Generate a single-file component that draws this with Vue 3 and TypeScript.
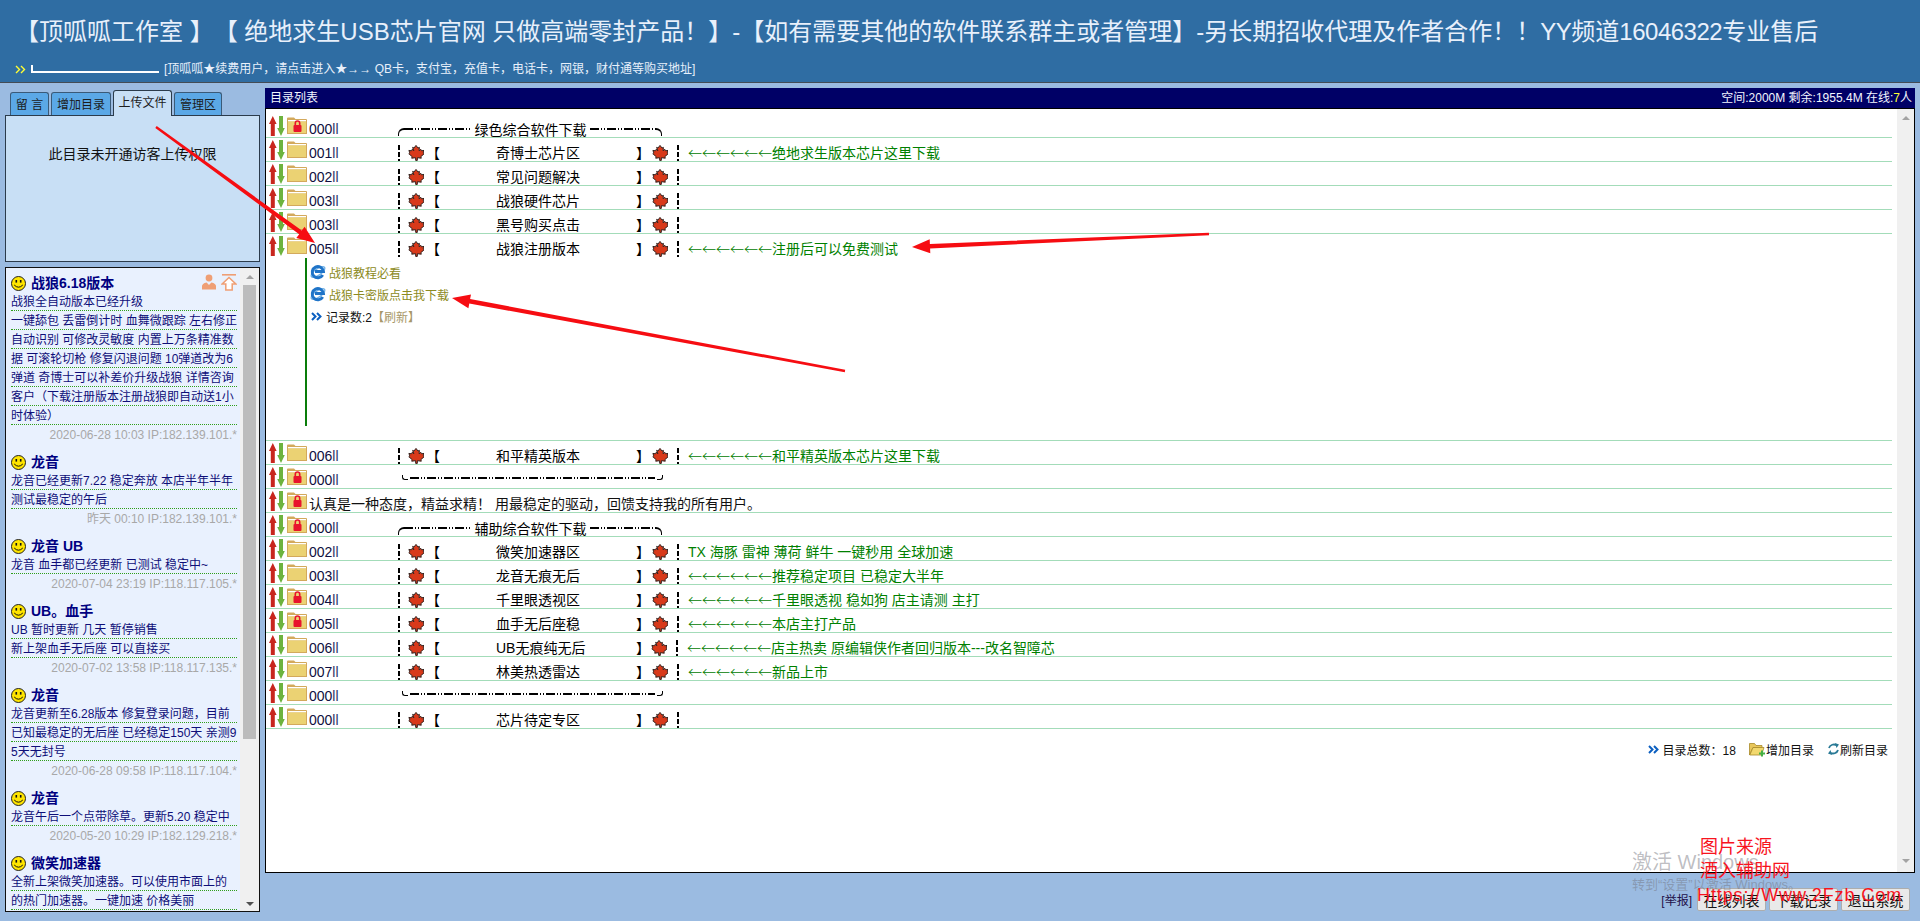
<script setup lang="ts">
interface Row {
  num: string
  kind: 'item' | 'top' | 'bottom' | 'text'
  lock?: boolean
  name?: string
  arrows?: boolean
  note?: string
  expanded?: boolean
  shift?: boolean
}
const rows: Row[] = [
  { num: '000', kind: 'top', lock: true, name: '绿色综合软件下载' },
  { num: '001', kind: 'item', name: '奇博士芯片区', arrows: true, note: '绝地求生版本芯片这里下载' },
  { num: '002', kind: 'item', name: '常见问题解决' },
  { num: '003', kind: 'item', name: '战狼硬件芯片' },
  { num: '003', kind: 'item', name: '黑号购买点击' },
  { num: '005', kind: 'item', name: '战狼注册版本', arrows: true, note: '注册后可以免费测试', expanded: true },
  { num: '006', kind: 'item', name: '和平精英版本', arrows: true, note: '和平精英版本芯片这里下载' },
  { num: '000', kind: 'bottom', lock: true },
  { num: '', kind: 'text', lock: true, name: '认真是一种态度，精益求精！ 用最稳定的驱动，回馈支持我的所有用户。' },
  { num: '000', kind: 'top', lock: true, name: '辅助综合软件下载' },
  { num: '002', kind: 'item', name: '微笑加速器区', note: 'TX 海豚 雷神 薄荷 鲜牛 一键秒用 全球加速' },
  { num: '003', kind: 'item', name: '龙音无痕无后', arrows: true, note: '推荐稳定项目 已稳定大半年' },
  { num: '004', kind: 'item', lock: true, name: '千里眼透视区', arrows: true, note: '千里眼透视 稳如狗 店主请测 主打' },
  { num: '005', kind: 'item', lock: true, name: '血手无后座稳', arrows: true, note: '本店主打产品' },
  { num: '006', kind: 'item', name: 'UB无痕纯无后', arrows: true, note: '店主热卖 原编辑侠作者回归版本---改名智障芯', shift: true },
  { num: '007', kind: 'item', name: '林美热透雷达', arrows: true, note: '新品上市' },
  { num: '000', kind: 'bottom' },
  { num: '000', kind: 'item', name: '芯片待定专区' }
]
const messages = [
  { title: '战狼6.18版本', tools: true, lines: ['战狼全自动版本已经升级', '一键舔包 丢雷倒计时 血舞微跟踪 左右修正', '自动识别 可修改灵敏度 内置上万条精准数', '据 可滚轮切枪 修复闪退问题 10弹道改为6', '弹道 奇博士可以补差价升级战狼 详情咨询', '客户（下载注册版本注册战狼即自动送1小', '时体验）'], date: '2020-06-28 10:03 IP:182.139.101.*' },
  { title: '龙音', lines: ['龙音已经更新7.22 稳定奔放 本店半年半年', '测试最稳定的午后'], date: '昨天 00:10 IP:182.139.101.*' },
  { title: '龙音 UB', lines: ['龙音 血手都已经更新 已测试 稳定中~'], date: '2020-07-04 23:19 IP:118.117.105.*' },
  { title: 'UB。血手', lines: ['UB 暂时更新 几天 暂停销售', '新上架血手无后座 可以直接买'], date: '2020-07-02 13:58 IP:118.117.135.*' },
  { title: '龙音', lines: ['龙音更新至6.28版本 修复登录问题，目前', '已知最稳定的无后座 已经稳定150天 亲测9', '5天无封号'], date: '2020-06-28 09:58 IP:118.117.104.*' },
  { title: '龙音', lines: ['龙音午后一个点带除草。更新5.20 稳定中'], date: '2020-05-20 10:29 IP:182.129.218.*' },
  { title: '微笑加速器', lines: ['全新上架微笑加速器。可以使用市面上的', '的热门加速器。一键加速 价格美丽'], date: '' }
]
const tabs = [
  { label: '留 言', cls: 't1' },
  { label: '增加目录', cls: 't2' },
  { label: '上传文件', cls: 't3 active' },
  { label: '管理区', cls: 't4' }
]
const links = ['战狼教程必看', '战狼卡密版点击我下载']
const leaf = 'M8 .4L10 3l1.400-.6-.3 3.400 1.700-1.500.7 1.500 2.600-.4-.9 2.500 1 .8-3.400 3 .5 1.500-3.900-.5-.1 2.700H7.700l-.1-2.700-3.900.5.5-1.500-3.400-3 1-.8-.9-2.500 2.600.4.7-1.500 1.700 1.500L4.600 2.400 6 3z'

function arrow(x1: number, y1: number, x2: number, y2: number): string {
  const len = Math.hypot(x2 - x1, y2 - y1)
  const ux = (x2 - x1) / len
  const uy = (y2 - y1) / len
  const nx = -uy
  const ny = ux
  const bx = x2 - ux * 18
  const by = y2 - uy * 18
  const pt = (x: number, y: number, w: number) => `${(x + nx * w).toFixed(1)},${(y + ny * w).toFixed(1)}`
  return [pt(x1, y1, 1.2), pt(bx, by, 2.2), pt(bx, by, 7), pt(x2, y2, 0), pt(bx, by, -7), pt(bx, by, -2.2), pt(x1, y1, -1.2)].join(' ')
}
const redArrows = [arrow(156, 127, 315, 243), arrow(1209, 234, 912, 247), arrow(845, 371, 452, 298)]
</script>

<template>
  <div class="page">
    <header class="top">
      <div class="title">【顶呱呱工作室 】【 绝地求生USB芯片官网 只做高端零封产品！】-【如有需要其他的软件联系群主或者管理】-另长期招收代理及作者合作！！<span class="tight">YY</span>频道<span class="tight">16046322</span>专业售后</div>
      <div class="sub">
        <svg class="chev-y" width="11" height="9" viewBox="0 0 11 9"><path d="M1 1l3.500 3.500L1 8M6 1l3.500 3.500L6 8" fill="none" stroke="#ffff33" stroke-width="1.400" /></svg>
        <span class="corner"></span>
        <span>[顶呱呱★续费用户，请点击进入★→→ QB卡，支付宝，充值卡，电话卡，网银，财付通等购买地址]</span>
      </div>
    </header>

    <div class="body">
      <aside class="side">
        <nav class="tabs">
          <div v-for="t in tabs" :key="t.label" class="tab" :class="t.cls">{{ t.label }}</div>
        </nav>
        <div class="panel">此目录未开通访客上传权限</div>
        <div class="msgs">
          <div class="msg-list">
            <article v-for="(m, i) in messages" :key="i" class="msg">
              <div class="msg-head">
                <svg width="15" height="15" viewBox="0 0 15 15"><circle cx="7.500" cy="7.500" r="7" fill="#ffe500" stroke="#222" /><rect x="4.500" y="4" width="1.600" height="2.600" fill="#111" /><rect x="8.900" y="4" width="1.600" height="2.600" fill="#111" /><path d="M3.200 9q4.300 4.400 8.600 0" fill="none" stroke="#111" /></svg>
                <b>{{ m.title }}</b>
                <span v-if="m.tools" class="tools">
                  <svg width="14" height="16" viewBox="0 0 14 16"><circle cx="7" cy="4" r="3.400" fill="#ef9f75" /><path d="M0 15.500V12q0-2.600 4.600-3.600L7 11l2.400-2.600Q14 9.400 14 12v3.500z" fill="#ef9f75" /></svg>
                  <svg width="16" height="17" viewBox="0 0 16 17"><path d="M1 .8h14" stroke="#ef9f75" stroke-width="1.600" /><path d="M8 3.500L14.800 10h-3.600v6H4.800v-6H1.200z" fill="#fff" stroke="#ef9f75" stroke-width="1.500" /></svg>
                </span>
              </div>
              <div v-for="(l, j) in m.lines" :key="j" class="msg-line">{{ l }}</div>
              <div v-if="m.date" class="msg-date">{{ m.date }}</div>
            </article>
          </div>
          <div class="bar side-bar">
            <i class="up"></i>
            <div class="thumb"></div>
            <i class="down"></i>
          </div>
        </div>
      </aside>

      <main class="main">
        <div class="main-head">
          <span>目录列表</span>
          <span>空间:2000M 剩余:1955.4M 在线:<em>7</em>人</span>
        </div>
        <div class="box">
          <div class="list">
            <template v-for="(r, i) in rows" :key="i">
              <div class="row" :class="{ open: r.expanded }">
                <svg class="updown" width="16" height="20" viewBox="0 0 16 20"><path d="M3.800 0L7.600 8H5.800v12h-4V8H0z" fill="#c8261e" /><path d="M12 20l3.800-8H14V0h-4v12H8.200z" fill="#6db33f" /></svg>
                <svg class="folder" width="20" height="17" viewBox="0 0 20 17">
                  <path d="M0 17V1.500Q0 .5 1 .5h6l1.500 1.500H19q1 0 1 1V17z" fill="#d3a95c" />
                  <rect x="1" y="3" width="18" height="1.500" fill="#fff" />
                  <rect x="1" y="4.500" width="18" height="11.500" fill="#ebd273" />
                  <g v-if="r.lock"><path d="M8.300 8V6.200a2.200 2.200 0 0 1 4.400 0V8" fill="none" stroke="#e8142c" stroke-width="1.600" /><rect x="6.500" y="8" width="8" height="7" rx="1" fill="#e8142c" /></g>
                </svg>
                <span v-if="r.kind === 'text'" class="plain">{{ r.name }}</span>
                <template v-else>
                  <span class="num">{{ r.num }}<small>ll</small></span>
                  <div v-if="r.kind === 'top'" class="cap">
                    <span class="rule left"><i></i></span>
                    <span class="cap-text">{{ r.name }}</span>
                    <span class="rule right"><i></i></span>
                  </div>
                  <div v-else-if="r.kind === 'bottom'" class="foot-rule"><i></i></div>
                  <div v-else class="item">
                    <span class="dash"></span>
                    <svg class="leaf" width="16" height="16" viewBox="0 0 16 16"><path :d="leaf" fill="#d8391a" stroke="#33221f" /></svg>
                    <span class="br">【</span>
                    <span class="name">{{ r.name }}</span>
                    <span class="br">】</span>
                    <svg class="leaf end" :class="{ shift: r.shift }" width="16" height="16" viewBox="0 0 16 16"><path :d="leaf" fill="#d8391a" stroke="#33221f" /></svg>
                    <span class="dash"></span>
                    <span class="note"><span v-if="r.arrows" class="arr">←←←←←←</span>{{ r.note }}</span>
                  </div>
                </template>
              </div>
              <div v-if="r.expanded" class="detail">
                <div class="detail-in">
                  <div v-for="l in links" :key="l" class="link">
                    <svg width="16" height="18" viewBox="0 0 16 18"><ellipse cx="8" cy="9" rx="8" ry="3.200" transform="rotate(-35 8 9)" fill="none" stroke="#6fb0e6" stroke-width="1.300" /><path d="M12.700 12A5.600 5.600 0 1 1 13.400 8.500H5" fill="none" stroke="#1f74c8" stroke-width="3" /></svg>
                    <span>{{ l }}</span>
                  </div>
                  <div class="count">
                    <svg width="11" height="9" viewBox="0 0 11 9"><path d="M1 1l3.500 3.500L1 8M6 1l3.500 3.500L6 8" fill="none" stroke="#0b5fc0" stroke-width="2" /></svg>
                    <span>记录数:2</span>
                    <span class="refresh">【刷新】</span>
                  </div>
                </div>
              </div>
            </template>
            <div class="summary">
              <svg width="11" height="9" viewBox="0 0 11 9"><path d="M1 1l3.500 3.500L1 8M6 1l3.500 3.500L6 8" fill="none" stroke="#0b5fc0" stroke-width="2" /></svg>
              <span class="total">目录总数：18</span>
              <svg width="17" height="15" viewBox="0 0 17 15"><path d="M.5 13V1.500h5l1.500 2h6v2H4l-3.500 7.500z" fill="#e8c65a" stroke="#a88a2a" stroke-width=".8" /><path d="M.8 13L4 5.500h11L12.500 13z" fill="#f2d86e" stroke="#a88a2a" stroke-width=".8" /><path d="M12 8.500h2v2h2v2h-2v2h-2v-2h-2v-2h2z" fill="#45b045" /></svg>
              <span class="act">增加目录</span>
              <svg width="13" height="14" viewBox="0 0 13 14"><path d="M2 6a5 4.500 0 0 1 8-2.500M11 8a5 4.500 0 0 1-8 2.500" fill="none" stroke="#2a7a96" stroke-width="1.800" /><path d="M8 1l4 1.500L9.500 6zM5 13L1 11.500 3.500 8z" fill="#2a7a96" /></svg>
              <span>刷新目录</span>
            </div>
          </div>
          <div class="bar">
            <i class="up"></i>
            <i class="down"></i>
          </div>
        </div>
        <div class="footer">
          <span class="report">[举报]</span>
          <button>在线列表</button>
          <button>下载记录</button>
          <button>退出系统</button>
        </div>
      </main>
    </div>

    <svg class="marks" width="1920" height="921" viewBox="0 0 1920 921">
      <polygon v-for="(p, i) in redArrows" :key="i" :points="p" fill="#f60d12" />
    </svg>
    <div class="activate">
      <div class="a1">激活 Windows</div>
      <div class="a2">转到“设置”以激活 Windows。</div>
    </div>
    <div class="stamp">
      <div class="s1">图片来源</div>
      <div class="s1">酒入辅助网</div>
      <div class="s2">Https://Www.2Fzb.Com</div>
    </div>
  </div>
</template>

<style>
html, body { margin: 0; background: #9bbbe1; }
</style>

<style scoped>
* { box-sizing: border-box; }
.page {
  position: relative;
  height: 921px;
  width: 1920px;
  overflow: hidden;
  background: #9bbbe1;
  font-family: "Liberation Sans", "Noto Sans CJK SC", sans-serif;
  font-size: 14px;
  color: #000;
  text-spacing-trim: space-all;
}
.top {
  height: 83px;
  background: #2f6da3;
  border-bottom: 1px solid #444c55;
  padding: 15px 0 0 15px;
  color: #e8f0fb;
}
.title { font-size: 24px; line-height: 34px; white-space: nowrap; }
.tight { letter-spacing: -.5px; }
.sub { display: flex; align-items: flex-end; margin-top: 12px; height: 16px; font-size: 12px; line-height: 16px; white-space: nowrap; }
.chev-y { margin-bottom: 3px; }
.corner { width: 128px; height: 8px; margin: 0 5px 4px 5px; border-left: 2px solid #fff; border-bottom: 2px solid #fff; }

.body { display: flex; padding: 5px 5px 0 5px; gap: 5px; }
.side { width: 255px; flex: none; padding-top: 2px; }
.tabs { display: flex; align-items: flex-end; height: 25px; padding-left: 5px; gap: 2px; position: relative; z-index: 1; font-size: 12px; }
.tab { height: 23px; border: 1px solid #3a5a78; border-bottom: none; border-radius: 3px 3px 0 0; background: #5ba8e6; text-align: center; line-height: 24px; color: #1c1c1c; }
.t1 { width: 39px; }
.t2 { width: 60px; }
.t3 { width: 59px; }
.t4 { width: 48px; }
.tab.active { height: 26px; margin-bottom: -1px; background: #c8dff5; line-height: 24px; border-color: #2b3b4b; }
.panel { height: 147px; background: #c8dff5; border: 1px solid #2b3b4b; text-align: center; padding-top: 29px; line-height: 18px; color: #111; }
.msgs { display: flex; margin-top: 5px; height: 645px; background: #e9f1fe; border: 1px solid #111; overflow: hidden; }
.msg-list { flex: 1; padding: 8px 3px 0 5px; min-width: 0; overflow: hidden; font-size: 12px; color: #0e0e78; }
.msg { margin-bottom: 11px; }
.msg-head { display: flex; align-items: flex-start; height: 16px; gap: 5px; position: relative; }
.msg-head b { font-size: 14px; line-height: 15px; color: #000080; }
.tools { margin-left: auto; display: flex; gap: 5px; margin-top: -2px; }
.msg-line { height: 19px; line-height: 20px; border-bottom: 1px dotted #2f9f1a; white-space: nowrap; }
.msg-date { height: 19px; line-height: 20px; text-align: right; color: #a8a8a8; white-space: nowrap; }
.bar { flex: none; width: 17px; background: #f0f0f0; position: relative; display: flex; flex-direction: column; align-items: center; }
.side-bar { width: 19px; padding: 0 1px; }
.bar i { display: block; width: 0; height: 0; border-left: 4px solid transparent; border-right: 4px solid transparent; }
.up { border-bottom: 4px solid #a3a3a3; margin-top: 7px; }
.down { border-top: 4px solid #505050; margin-top: auto; margin-bottom: 7px; }
.box .down { border-top-color: #a3a3a3; margin-bottom: 9px; }
.thumb { width: 13px; height: 454px; margin-top: 6px; background: #bcbcbc; }
.side-bar .down { margin-bottom: 5px; }

.main { width: 1650px; flex: none; }
.main-head { display: flex; justify-content: space-between; height: 20px; background: #000066; color: #f2f6ff; font-size: 12px; line-height: 21px; padding: 0 3px 0 5px; }
.main-head em { font-style: normal; color: #ffff33; }
.box { display: flex; height: 765px; background: #fff; border: 1px solid #000; }
.list { flex: 1; min-width: 0; padding: 5px 5px 0 0; }
.row { display: flex; height: 24px; border-bottom: 1px solid #a3dcb9; position: relative; white-space: nowrap; }
.row.open { border-bottom-color: transparent; }
.updown { flex: none; margin: 2px 0 0 3px; }
.folder { flex: none; margin: 3px 0 0 2px; }
.num, .plain { margin-left: 2px; margin-top: 7px; line-height: 16px; color: #101040; }
.num { width: 89px; flex: none; }
.num small { font-size: 14px; color: #33336a; }
.plain { color: #111; }
.cap { display: flex; align-items: center; width: 264px; height: 16px; margin-top: 7px; }
.cap-text { margin: 0 3px 0 4px; flex: none; }
.rule { flex: 1; position: relative; height: 6px; margin-top: 3px; }
.rule i, .foot-rule i { display: block; height: 2px; background: repeating-linear-gradient(90deg, #000 0 9px, transparent 9px 11px, #000 11px 12px, transparent 12px 14px, #000 14px 15px, transparent 15px 17px); }
.rule.left { padding-left: 6px; }
.rule.right { padding-right: 6px; }
.rule::before { content: ""; position: absolute; top: 0; width: 6px; height: 6px; border-top: 2px solid #000; }
.rule.left::before { left: 0; border-left: 1px solid #000; border-top-left-radius: 6px; }
.rule.right::before { right: 0; border-right: 1px solid #000; border-top-right-radius: 6px; }
.foot-rule { width: 261px; height: 5px; margin: 9px 0 0 4px; padding: 3px 8px 0; position: relative; }
.foot-rule::before, .foot-rule::after { content: ""; position: absolute; top: 1px; width: 5px; height: 4px; border-bottom: 1px solid #000; }
.foot-rule::before { left: 0; border-left: 1px solid #000; border-bottom-left-radius: 3px; }
.foot-rule::after { right: 0; border-right: 1px solid #000; border-bottom-right-radius: 3px; }
.item { display: flex; flex: 1; min-width: 0; align-items: flex-start; margin-top: 7px; line-height: 16px; }
.dash { flex: none; width: 2px; height: 16px; background: linear-gradient(#000 0 5px, transparent 5px 7px, #000 7px 12px, transparent 12px 14px, #000 14px 16px); }
.leaf { flex: none; margin: 0 2px 0 8px; }
.leaf.end { margin: 0 9px 0 2px; }
.leaf.shift { margin: 0 9px 0 1px; }
.br { flex: none; width: 14px; }
.name { flex: none; width: 140px; margin-left: 56px; }
.note { margin-left: 9px; color: #008000; }
.arr { font-family: "Noto Sans CJK SC", sans-serif; font-weight: 300; line-height: 0; }

.detail { height: 183px; border-bottom: 1px solid #a3dcb9; padding-left: 39px; }
.detail-in { width: 200px; height: 168px; border-left: 2px solid #0a7d0a; padding: 3px 0 0 3px; font-size: 12px; }
.link { display: flex; align-items: center; height: 22px; gap: 3px; color: #8c8a22; white-space: nowrap; }
.count { display: flex; align-items: center; height: 22px; gap: 4px; padding-left: 1px; color: #111; }
.refresh { color: #a89868; margin-left: -4px; }
.summary { display: flex; justify-content: flex-end; align-items: center; height: 14px; margin-top: 13px; padding-right: 4px; font-size: 12px; color: #111; }
.total { margin: 0 13px 0 4px; }
.act { margin-right: 13px; }
.footer { display: flex; justify-content: flex-end; align-items: center; gap: 3px; height: 23px; margin-top: 15px; padding-right: 5px; }
.report { color: #22114a; font-size: 12px; margin-right: 2px; }
.footer button { width: 69px; height: 23px; padding: 0; font: inherit; color: #111; background: #e9e9e9; border: 1px solid #adadad; border-radius: 2px; }

.marks { position: absolute; left: 0; top: 0; pointer-events: none; }
.activate { position: absolute; left: 1632px; top: 849px; color: rgba(110, 110, 120, .45); white-space: nowrap; pointer-events: none; }
.a1 { font-size: 20px; line-height: 26px; }
.a2 { font-size: 13px; line-height: 18px; margin-top: 1px; }
.stamp { position: absolute; left: 1697px; top: 835px; color: #f8141e; white-space: nowrap; pointer-events: none; }
.s1 { font-size: 18px; line-height: 24px; padding-left: 3px; }
.s2 { font-size: 18px; line-height: 24px; letter-spacing: .9px; }
</style>
